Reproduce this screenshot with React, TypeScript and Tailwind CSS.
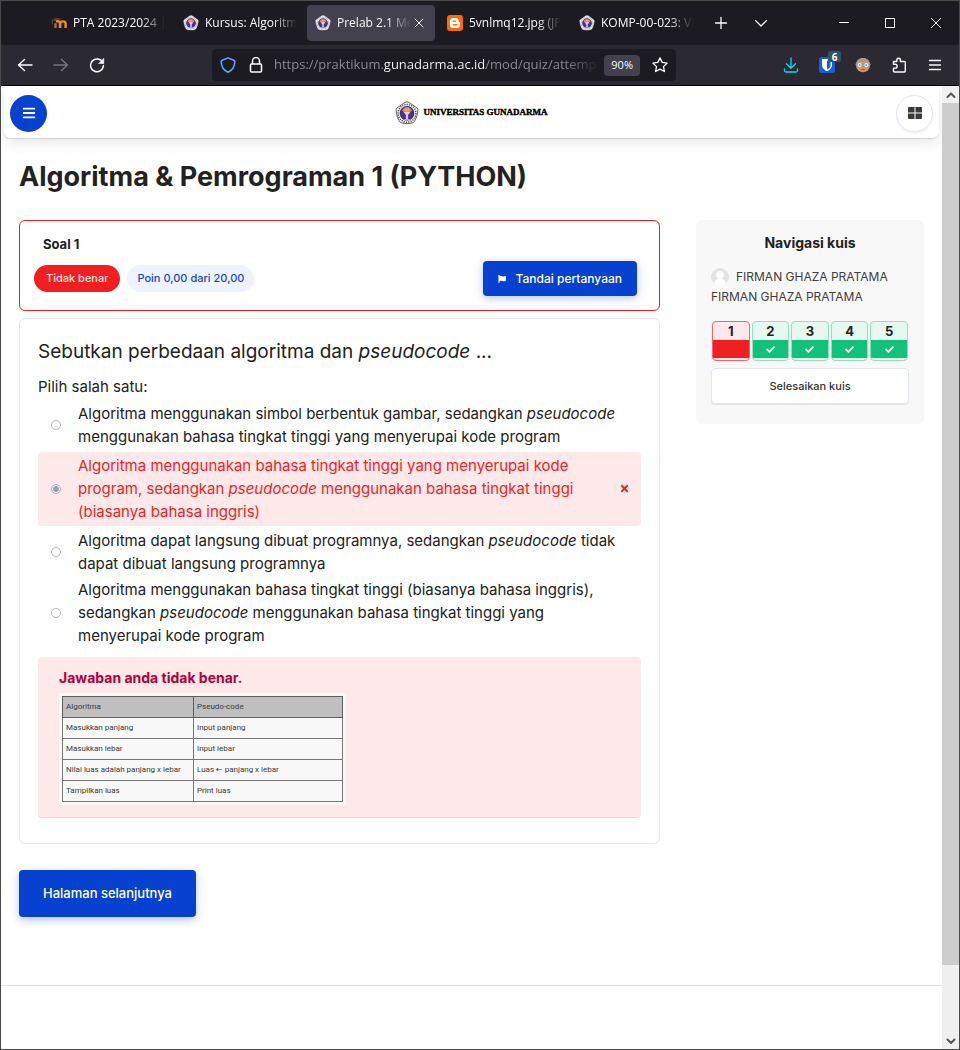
import React, { useState } from "react";
import { FaBars, FaCheck, FaFlag, FaTimes } from "react-icons/fa";

function Emblem({ className, light = false }: { className?: string; light?: boolean }) {
  const edge = light ? "#e9e6e6" : "#3c3a40";
  return (
    <svg viewBox="0 0 24 24" className={className} aria-hidden="true">
      <path
        d="M12 .8c.8 0 1.5.3 2.3.8l6.6 4.6c1.5 1 2.2 1.8 2 3.3-.3 3.600-1.400 7-3 10.200-.6 1.300-1.400 2-3 2.300-3.200.8-6.600.8-9.800 0-1.600-.3-2.400-1-3-2.300C2.500 16.500 1.400 13.100 1.100 9.500c-.2-1.500.5-2.300 2-3.300l6.600-4.600c.8-.5 1.500-.8 2.300-.8z"
        fill="#f4f1f0"
        stroke={edge}
        strokeWidth={light ? 0.6 : 0.8}
      />
      <circle cx="12" cy="12.300" r="8.900" fill="none" stroke={light ? "#8d8890" : "#4b474e"} strokeWidth="1.500" strokeDasharray="1.100 1.200" />
      <circle cx="12" cy="12.300" r="7" fill="#4a3191" stroke="#2a1e55" strokeWidth=".6" />
      <path d="M7 9.800c1.200-2.600 3-3.700 5-3.700s3.800 1.100 5 3.700l-2.600 1.800H9.600z" fill="#d98473" />
      <path d="M9.300 8.600l1.300-2 1.400 1.600 1.400-1.600 1.300 2-.9 2.200h-3.600z" fill="#e9a35a" />
      <path d="M8.600 10.900h6.800l-2.300 3.200v4.200h-2.200v-4.200z" fill="#e8c8dc" />
      <path d="M9 18h6l-1 1.300h-4z" fill="#c9a3c8" />
    </svg>
  );
}

function MoodleIcon() {
  return (
    <svg viewBox="0 0 16 16" className="size-4 shrink-0" aria-hidden="true">
      <path d="M0 5.200L4.500 3l6 .6-3.300 2.600z" fill="#4a4442" />
      <path d="M1.300 5.400v3.800" stroke="#6b5a4c" strokeWidth=".8" />
      <path d="M4.500 13V8.200" stroke="#b56a25" strokeWidth="2.400" />
      <path d="M9 13V8.300c0-2.200-2.600-2.400-4-1.500M14.600 13V8.600c0-3-5.400-3-5.400 0V13" fill="none" stroke="#f18a21" strokeWidth="2.400" />
    </svg>
  );
}

function BloggerIcon() {
  return (
    <svg viewBox="0 0 16 16" className="size-4 shrink-0" aria-hidden="true">
      <rect width="16" height="16" rx="3" fill="#ff6a00" />
      <path d="M6 3h2.600C10.500 3 11.600 4.300 11.600 6c0 .8.300 1 .9 1s.7.400.7.900v1.700c0 2-1.400 3.400-3.400 3.400H6.200c-2 0-3.400-1.400-3.400-3.400V6.300C2.800 4.400 4.200 3 6 3z" fill="#fff" />
      <path d="M6.200 6.200h2.200M6.200 9.800h3.700" stroke="#ff6a00" strokeWidth="1.400" strokeLinecap="round" />
    </svg>
  );
}

function Line({ d, className = "size-4", width = 1.3, children }: { d: string; className?: string; width?: number; children?: React.ReactNode }) {
  return (
    <svg viewBox="0 0 16 16" className={className} fill="none" stroke="currentColor" strokeWidth={width} strokeLinecap="round" strokeLinejoin="round" aria-hidden="true">
      <path d={d} />
      {children}
    </svg>
  );
}

const tabs = [
  { title: "PTA 2023/2024 | 1", icon: <MoodleIcon /> },
  { title: "Kursus: Algoritm", icon: <Emblem light className="size-4 shrink-0" /> },
  { title: "Prelab 2.1 Mer", icon: <Emblem light className="size-4 shrink-0" />, active: true },
  { title: "5vnlmq12.jpg (JP", icon: <BloggerIcon /> },
  { title: "KOMP-00-023: Vi", icon: <Emblem light className="size-4 shrink-0" /> },
];

function TabBar() {
  return (
    <div className="flex h-11 shrink-0 items-center bg-[#1c1b22] pl-[42px] text-[#fbfbfe]">
      <div className="flex min-w-0 gap-1" role="tablist">
        {tabs.map((t) => (
          <div key={t.title} className={t.active ? "flex h-9 w-32 min-w-0 items-center rounded bg-[#42414d] px-2" : "flex h-9 w-32 min-w-0 items-center pr-1.5 pl-2"}>
            <button role="tab" aria-selected={!!t.active} className="flex min-w-0 flex-1 items-center gap-1.5 text-left text-xs">
              {t.icon}
              <span className="min-w-0 flex-1 overflow-hidden whitespace-nowrap [mask-image:linear-gradient(to_left,transparent,black_24px)]">{t.title}</span>
            </button>
            {t.active && (
              <button aria-label="Tutup tab" className="grid size-4 place-items-center">
                <Line d="M4 4l8 8M12 4l-8 8" width={1} />
              </button>
            )}
          </div>
        ))}
      </div>
      <button aria-label="Tab baru" className="ml-0.5 grid size-10 place-items-center">
        <Line d="M8 2.500v11M2.500 8h11" width={1.3} />
      </button>
      <button aria-label="Daftar tab" className="grid size-10 place-items-center">
        <Line d="M2.500 5.500L8 11l5.500-5.500" width={1.3} />
      </button>
      <div className="ml-auto flex">
        <button aria-label="Kecilkan" className="grid h-10 w-[46px] place-items-center">
          <svg viewBox="0 0 10 10" className="size-2.5" aria-hidden="true"><path d="M0 4.500h10" stroke="#fff" /></svg>
        </button>
        <button aria-label="Besarkan" className="grid h-10 w-[46px] place-items-center">
          <svg viewBox="0 0 10 10" className="size-2.5" aria-hidden="true"><path d="M.5.5h9v9h-9z" fill="none" stroke="#fff" /></svg>
        </button>
        <button aria-label="Tutup jendela" className="grid h-10 w-[46px] place-items-center">
          <svg viewBox="0 0 10 10" className="size-2.5" aria-hidden="true"><path d="M0 0l10 10M10 0L0 10" stroke="#fff" strokeWidth=".9" /></svg>
        </button>
      </div>
    </div>
  );
}

function Toolbar() {
  const [url, setUrl] = useState("https://praktikum.gunadarma.ac.id/mod/quiz/attempt.php");
  return (
    <div className="flex h-[41px] shrink-0 items-center border-b border-black bg-[#2b2a33] px-1.5 text-[#fbfbfe]">
      <button aria-label="Kembali" className="grid size-9 place-items-center">
        <Line d="M15 8H1.500M7.500 2.500L1.500 8l6 5.500" width={1.4} />
      </button>
      <button aria-label="Maju" className="grid size-9 place-items-center text-[#77767e]">
        <Line d="M1 8h13.500M8.500 2.500l6 5.500-6 5.500" width={1.4} />
      </button>
      <button aria-label="Muat ulang" className="grid size-9 place-items-center">
        <Line d="M13.800 5.600A6.400 6.400 0 1 0 14.400 8.500" width={1.5}>
          <path d="M14.800 1.500v5h-5z" fill="currentColor" strokeWidth=".5" />
        </Line>
      </button>
      <div className="flex-[97]" />
      <div className="flex h-8 flex-[448] items-center rounded bg-[#1c1b22] px-2">
        <svg viewBox="0 0 16 16" className="size-4 shrink-0" aria-hidden="true">
          <defs>
            <linearGradient id="shield" x1="0" y1="1" x2="1" y2="0">
              <stop offset="0" stopColor="#1cc8f5" />
              <stop offset="1" stopColor="#a487f5" />
            </linearGradient>
          </defs>
          <path d="M8 .9l6.300 2.600c.4.200.6.500.6.900-.2 5-2.700 9-6.900 10.800C3.800 13.400 1.300 9.400 1.100 4.400c0-.4.200-.7.600-.9z" fill="none" stroke="url(#shield)" strokeWidth="1.500" strokeLinejoin="round" />
        </svg>
        <Line d="M3.500 7h9a1 1 0 0 1 1 1v6a1 1 0 0 1-1 1h-9a1 1 0 0 1-1-1V8a1 1 0 0 1 1-1zM4.500 7V4a3.500 3.500 0 0 1 7 0v3" className="ml-3 size-4 shrink-0" width={1.5} />
        <input
          aria-label="Alamat"
          value={url}
          onChange={(e) => setUrl(e.target.value)}
          className="ml-2.5 min-w-0 flex-1 bg-[linear-gradient(to_right,#8f8e97_110px,#fbfbfe_110px,#fbfbfe_212px,#8f8e97_212px,#8f8e97_290px,transparent_326px)] bg-clip-text text-[13px] text-transparent outline-none"
        />
        <button className="ml-1 h-[21px] rounded-sm bg-[#42414d] px-[7px] text-[11px]">90%</button>
        <button aria-label="Tandai halaman" className="ml-3 grid size-4 place-items-center">
          <Line d="M8 .9l2.200 4.500 4.900.7-3.600 3.500.9 4.900L8 12.200l-4.400 2.300.9-4.900L.9 6.100l4.900-.7z" width={1.3} />
        </button>
      </div>
      <div className="flex-[97]" />
      <button aria-label="Unduhan" className="grid size-9 place-items-center text-[#00ddff]">
        <Line d="M8 1v10M3.500 6.800L8 11.200l4.500-4.400M1.500 12v1.500a1.500 1.500 0 0 0 1.500 1.500h10a1.500 1.500 0 0 0 1.500-1.500V12" width={1.3} />
      </button>
      <button aria-label="Pengelola sandi" className="relative grid size-9 place-items-center">
        <svg viewBox="0 0 16 16" className="size-4" aria-hidden="true">
          <rect width="16" height="16" rx="2.500" fill="#175ddc" />
          <path d="M3 2h10v6.500c0 2.600-2.400 4.400-5 5.700-2.600-1.300-5-3.100-5-5.700z" fill="#fff" />
          <path d="M8 3.500h3.500v5c0 1.600-1.600 2.900-3.500 4z" fill="#175ddc" />
        </svg>
        <span className="absolute top-1 right-1 grid h-[11px] w-[13px] place-items-center rounded-xs bg-[#2f5266] text-[10px] leading-none font-bold text-white">6</span>
      </button>
      <button aria-label="Profil" className="grid size-9 place-items-center">
        <svg viewBox="0 0 16 16" className="size-4" aria-hidden="true">
          <circle cx="8" cy="8.300" r="7" fill="#d98f68" />
          <path d="M1 6.500C2 2.500 4.800 1 8 1s6 1.500 7 5.500c-4-2-10-2-14 0z" fill="#b59a6b" />
          <path d="M.5 6.600h15v1.600H.5z" fill="#8ba3a6" />
          <circle cx="4.600" cy="8" r="2.500" fill="#f2fbfc" stroke="#7fa9ad" />
          <circle cx="11.400" cy="8" r="2.500" fill="#f2fbfc" stroke="#7fa9ad" />
          <circle cx="4.800" cy="8" r=".8" fill="#476066" />
          <circle cx="11.200" cy="8" r=".8" fill="#476066" />
          <path d="M6.200 12.600h3.600" stroke="#a8543f" />
        </svg>
      </button>
      <button aria-label="Ekstensi" className="grid size-9 place-items-center">
        <Line d="M2.500 5.500v-1h3.300V3a1.800 1.800 0 0 1 3.600 0v1.500h4a.9.9 0 0 1 .9.900v8.700a.9.9 0 0 1-.9.900H3.400a.9.9 0 0 1-.9-.9v-3h1.700a1.900 1.900 0 0 0 0-3.800H2.500z" width={1.4} />
      </button>
      <button aria-label="Menu aplikasi" className="grid size-9 place-items-center">
        <Line d="M2.500 3.500h11M2.500 8h11M2.500 12.500h11" width={1.3} />
      </button>
    </div>
  );
}

function SiteHeader() {
  return (
    <header className="mx-[3px] flex h-[52px] items-center justify-between rounded-b-md bg-white px-1.5 pt-0.5 shadow-[0_1px_1px_rgba(0,0,0,0.12),0_5px_14px_rgba(0,0,0,0.09)]">
      <button aria-label="Menu" className="grid size-[37px] place-items-center rounded-full bg-[#0741cf] text-white">
        <FaBars className="size-3.5" />
      </button>
      <a href="#beranda" className="flex items-center gap-1 font-['Liberation_Serif',serif] text-[9px] font-bold text-black">
        <Emblem className="size-6" />
        <span className="[-webkit-text-stroke:0.4px_black]">UNIVERSITAS GUNADARMA</span>
      </a>
      <button aria-label="Blok" className="grid size-[37px] place-items-center rounded-full border border-[#e4e7f3] bg-white text-[#3a3a3a] shadow-[0_2px_2px_rgba(0,0,0,0.06)]">
        <svg viewBox="0 0 14 12" className="h-3 w-3.5" fill="currentColor" aria-hidden="true">
          <path d="M1 0h5.500v5.500H0V1a1 1 0 0 1 1-1zM7.500 0H13a1 1 0 0 1 1 1v4.500H7.500zM0 6.500h6.500V12H1a1 1 0 0 1-1-1zM7.500 6.500H14V11a1 1 0 0 1-1 1H7.500z" />
        </svg>
      </button>
    </header>
  );
}

const options: { text: React.ReactNode; wrong?: boolean }[] = [
  { text: <>Algoritma menggunakan simbol berbentuk gambar, sedangkan <em>pseudocode</em> menggunakan bahasa tingkat tinggi yang menyerupai kode program</> },
  { text: <>Algoritma menggunakan bahasa tingkat tinggi yang menyerupai kode program, sedangkan <em>pseudocode</em> menggunakan bahasa tingkat tinggi (biasanya bahasa inggris)</>, wrong: true },
  { text: <>Algoritma dapat langsung dibuat programnya, sedangkan <em>pseudocode</em> tidak dapat dibuat langsung programnya</> },
  { text: <>Algoritma menggunakan bahasa tingkat tinggi (biasanya bahasa inggris), sedangkan <em>pseudocode</em> menggunakan bahasa tingkat tinggi yang menyerupai kode program</> },
];

const comparison = [
  ["Masukkan panjang", "Input panjang"],
  ["Masukkan lebar", "Input lebar"],
  ["Nilai luas adalah panjang x lebar", "Luas ← panjang x lebar"],
  ["Tampilkan luas", "Print luas"],
];

function Question() {
  const [picked, setPicked] = useState(1);
  return (
    <div className="min-w-0 flex-1">
      <section className="rounded-md border border-[#f11f1f] px-3.5 pt-[13px] pb-3.5">
        <h3 className="pl-[9px] text-[13px] leading-5 font-bold text-[#1d2125]">Soal 1</h3>
        <div className="mt-[7px] flex items-center gap-[7px] pr-2">
          <span className="rounded-full bg-[#f11f1f] px-3 text-[11px] leading-[27px] font-medium text-[#ffe0e0]">Tidak benar</span>
          <span className="rounded-full bg-[#eff3ff] px-2.5 text-[11px] leading-[27px] font-medium text-[#1546cf]">Poin 0,00 dari 20,00</span>
          <button className="ml-auto flex h-[35px] items-center gap-2.5 rounded bg-[#0741cf] px-[15px] text-xs font-medium text-white shadow-[0_2px_8px_rgba(7,65,207,0.3)]">
            <FaFlag className="size-2" />
            Tandai pertanyaan
          </button>
        </div>
      </section>

      <section className="mt-[7px] rounded-md border border-[#e6e7e9] px-[18px] pt-[19px] pb-[25px]">
        <p className="text-[19px] leading-7">Sebutkan perbedaan algoritma dan <em>pseudocode</em> ...</p>
        <fieldset>
          <legend className="pt-[9px] text-[15px] leading-[23px]">Pilih salah satu:</legend>
          <div className="mt-1 flex flex-col gap-[3px]">
            {options.map((o, i) => (
              <div key={i} className={o.wrong ? "mt-px flex items-center rounded bg-[#fee9ea] pt-0.5 pr-[11px] pb-[3px] pl-[13px] text-[#f11f1f]" : "flex items-center pr-[11px] pl-[13px]"}>
                <input
                  type="radio"
                  name="jawaban"
                  id={`jawaban-${i}`}
                  checked={picked === i}
                  onChange={() => setPicked(i)}
                  className="size-2.5 shrink-0 appearance-none rounded-full border border-[#b9b8c1] bg-white checked:bg-[#a09fa8] checked:shadow-[inset_0_0_0_1px_white]"
                />
                <label htmlFor={`jawaban-${i}`} className="ml-[17px] min-w-0 flex-1 text-[15px] leading-[23px]">{o.text}</label>
                {o.wrong && <FaTimes className="ml-5 size-[11px]" aria-label="Salah" />}
              </div>
            ))}
          </div>
        </fieldset>
        <div className="mt-2.5 rounded border-b border-[#fbd3d7] bg-[#fee9ea] px-[21px] pt-[11px] pb-3">
          <p className="text-sm leading-5 font-bold text-[#b3003b]">Jawaban anda tidak benar.</p>
          <div className="mt-[5px] w-fit bg-[#f8f8f8] p-[3px]">
            <table className="w-[281px] table-fixed border-collapse font-['Roboto','DejaVu_Sans',sans-serif] text-[8px] leading-5 text-[#3a3a3a]">
              <thead>
                <tr className="bg-[#bfbfbf] text-left">
                  <th className="w-[131px] border border-[#5f5f5f] px-[3px] font-normal">Algoritma</th>
                  <th className="border border-[#5f5f5f] px-[3px] font-normal">Pseudo-code</th>
                </tr>
              </thead>
              <tbody>
                {comparison.map(([a, b]) => (
                  <tr key={a}>
                    <td className="border border-[#777] px-[3px] whitespace-nowrap">{a}</td>
                    <td className="border border-[#777] px-[3px] whitespace-nowrap">{b}</td>
                  </tr>
                ))}
              </tbody>
            </table>
          </div>
        </div>
      </section>

      <button className="mt-[26px] h-[47px] rounded bg-[#0741cf] px-6 text-[13px] font-medium text-white shadow-[0_3px_9px_rgba(7,65,207,0.3)]">Halaman selanjutnya</button>
    </div>
  );
}

function QuizNav() {
  return (
    <aside className="w-[228px] shrink-0 rounded-md bg-[#f8f8f8] px-[15px] pt-[13px] pb-5">
      <h2 className="text-center text-sm leading-5 font-bold">Navigasi kuis</h2>
      <div className="mt-3.5 text-xs leading-5 text-[#404040]">
        <div className="flex items-center gap-[7px]">
          <svg viewBox="0 0 18 18" className="size-[18px]" aria-hidden="true">
            <circle cx="9" cy="9" r="9" fill="#e3e3e3" />
            <circle cx="9" cy="7" r="3.900" fill="#fff" />
            <path d="M3 15.700c.5-3.500 3-5.200 6-5.200s5.500 1.700 6 5.200A9 9 0 0 1 9 18a9 9 0 0 1-6-2.300z" fill="#fff" />
          </svg>
          FIRMAN GHAZA PRATAMA
        </div>
        <div>FIRMAN GHAZA PRATAMA</div>
      </div>
      <nav className="mt-3.5 grid grid-cols-5 gap-0.5 px-px" aria-label="Soal">
        {[1, 2, 3, 4, 5].map((n) => (
          <a
            key={n}
            href={`#soal-${n}`}
            className={
              n === 1
                ? "flex h-10 flex-col overflow-hidden rounded border border-[#f5636c] bg-[#fee9ea] pb-0.5 text-center text-[13px] font-bold"
                : "flex h-10 flex-col overflow-hidden rounded border border-[#8fe3bd] bg-[#e7f8f0] pb-0.5 text-center text-[13px] font-bold"
            }
          >
            <span className="leading-[18px]">{n}</span>
            <span className={n === 1 ? "flex-1 bg-[#f11f1f]" : "grid flex-1 place-items-center bg-[#12c27a] text-white"}>
              {n !== 1 && <FaCheck className="size-[9px]" />}
            </span>
          </a>
        ))}
      </nav>
      <button className="mt-[7px] h-9 w-full rounded border border-[#e2e6f3] bg-white text-[11px] font-medium text-[#333] shadow-[0_1px_1px_rgba(0,0,0,0.08)]">Selesaikan kuis</button>
    </aside>
  );
}

function ScrollBar() {
  return (
    <div className="flex w-[17px] shrink-0 flex-col bg-[#f0f0f0] text-[#555]" aria-hidden="true">
      <div className="grid h-[17px] place-items-center"><Line d="M4.500 10L8 6.500l3.500 3.500" width={2} /></div>
      <div className="flex-[862] bg-[#cdcdcd]" />
      <div className="flex-[67]" />
      <div className="grid h-[17px] place-items-center"><Line d="M4.500 6.500L8 10l3.500-3.500" width={2} /></div>
    </div>
  );
}

export default function App() {
  return (
    <div className="flex min-h-screen flex-col border border-[#4b4b4b] bg-white font-['Open_Sans',sans-serif]">
      <TabBar />
      <Toolbar />
      <div className="flex flex-1">
        <div className="min-w-0 flex-1 font-['Inter',sans-serif] text-[#222]">
          <SiteHeader />
          <main className="px-[18px]">
            <h1 className="pt-[21px] text-[27px] leading-9 font-bold">Algoritma &amp; Pemrograman 1 (PYTHON)</h1>
            <div className="mt-[25px] flex items-start gap-9">
              <Question />
              <QuizNav />
            </div>
          </main>
          <footer className="mt-[68px] border-t border-[#e3e3e3]" />
        </div>
        <ScrollBar />
      </div>
    </div>
  );
}
